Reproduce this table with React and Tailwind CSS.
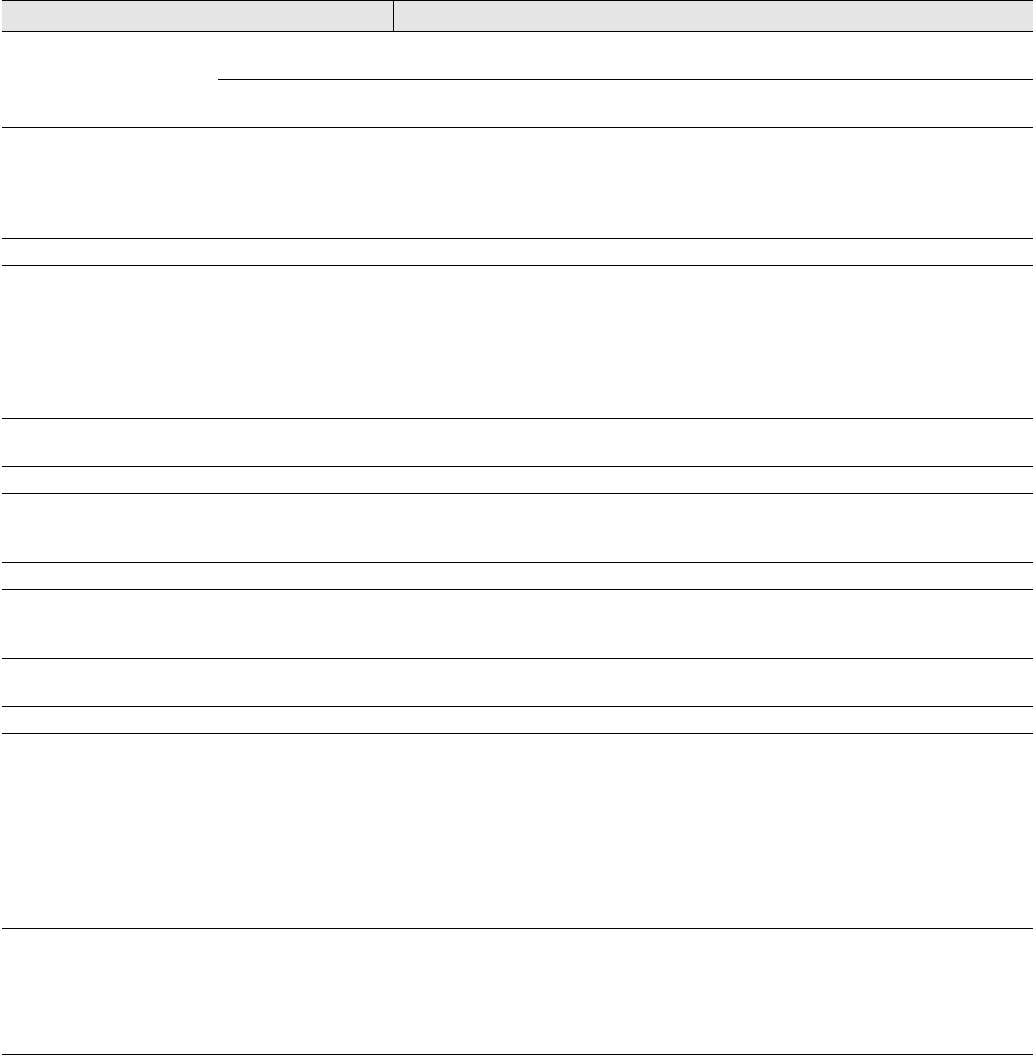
import React from 'react'

const rows = [
  { h: 'h-[111px]' },
  { h: 'h-[27px]' },
  { h: 'h-[153px]' },
  { h: 'h-[48px]' },
  { h: 'h-[27px]' },
  { h: 'h-[69px]' },
  { h: 'h-[27px]' },
  { h: 'h-[69px]' },
  { h: 'h-[48px]' },
  { h: 'h-[27px]' },
  { h: 'h-[195px]' },
  { h: 'h-[126px]' },
]

export default function App() {
  return (
    <div className="min-h-screen bg-white font-['Liberation_Sans',Arial,sans-serif] text-sm text-black">
      <div className="mx-[2px]">
        {/* Header */}
        <div className="flex h-[32px] border-y border-black bg-[#e5e5e5]">
          <div className="w-[392px] border-r border-black"></div>
          <div className="flex-1"></div>
        </div>

        {/* First row with split right side */}
        <div className="flex h-[96px] border-b border-black">
          <div className="w-[216px]"></div>
          <div className="flex flex-1 flex-col">
            <div className="h-[48px] border-b border-black"></div>
            <div className="flex-1"></div>
          </div>
        </div>

        {rows.map((row, i) => (
          <div key={i} className={`${row.h} border-b border-black`}></div>
        ))}
      </div>
    </div>
  )
}
